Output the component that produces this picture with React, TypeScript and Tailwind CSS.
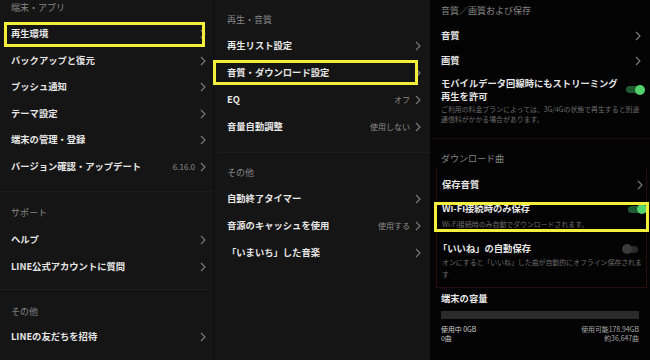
import React from "react";

const JP = "font-['Noto_Sans_CJK_JP','Noto_Sans',sans-serif]";

function Chevron() {
  return (
    <svg width="6" height="10" viewBox="0 0 6 10" className="shrink-0">
      <path d="M1 1l4 4-4 4" fill="none" stroke="#7c7c7c" strokeWidth="1.1" />
    </svg>
  );
}

function Toggle({ on }: { on: boolean }) {
  return (
    <div className={`relative w-[15px] h-[7px] rounded-full ${on ? "bg-[#1e5a31]" : "bg-[#2a2a2a]"}`}>
      <div
        className={`absolute top-1/2 -translate-y-1/2 w-[10px] h-[10px] rounded-full ${
          on ? "right-[-4px] bg-[#52d36d]" : "left-[-1px] bg-[#3a3a3a]"
        }`}
      />
    </div>
  );
}

function Header({ children, className = "" }: { children: React.ReactNode; className?: string }) {
  return (
    <div className={`h-[16px] flex items-center text-[9px] text-[#858585] ${className}`}>{children}</div>
  );
}

function Row({
  label,
  value,
  className = "",
  box,
}: {
  label: string;
  value?: string;
  className?: string;
  box?: string;
}) {
  return (
    <div className={`relative flex items-center ${className}`}>
      <span className="text-[9.3px] font-bold text-[#e6e6e6] whitespace-nowrap">{label}</span>
      <div className="ml-auto flex items-center gap-[5px]">
        {value && <span className="text-[8px] text-[#8c8c8c]">{value}</span>}
        <Chevron />
      </div>
      {box && <div className={`absolute border-[3px] border-[#f3ef3b] ${box}`} />}
    </div>
  );
}

function LeftPanel() {
  return (
    <div className="w-[213px] shrink-0 bg-[#151515] flex flex-col">
      <Header className="pl-[11px]">端末・アプリ</Header>
      <div className="mt-[5px] flex flex-col pl-[11px] pr-[7px]">
        <Row label="再生環境" className="h-[26.5px]" box="left-[-7px] right-[1px] top-[1px] bottom-[1px]" />
        <Row label="バックアップと復元" className="h-[26.5px]" />
        <Row label="プッシュ通知" className="h-[26.5px]" />
        <Row label="テーマ設定" className="h-[26.5px]" />
        <Row label="端末の管理・登録" className="h-[26.5px]" />
        <Row label="バージョン確認・アップデート" value="6.16.0" className="h-[26.5px]" />
      </div>
      <div className="mt-[11px] h-px bg-[#1d1d1d]" />
      <Header className="pl-[11px] mt-[13px]">サポート</Header>
      <div className="mt-[6px] flex flex-col pl-[11px] pr-[7px]">
        <Row label="ヘルプ" className="h-[26.5px]" />
        <Row label="LINE公式アカウントに質問" className="h-[26.5px]" />
      </div>
      <div className="mt-[9px] h-px bg-[#1d1d1d]" />
      <Header className="pl-[11px] mt-[14px]">その他</Header>
      <div className="mt-[4px] flex flex-col pl-[11px] pr-[7px]">
        <Row label="LINEの友だちを招待" className="h-[26.5px]" />
      </div>
    </div>
  );
}

function MiddlePanel() {
  return (
    <div className="w-[217px] shrink-0 bg-[#151515] border-l border-[#0d0d0d] flex flex-col">
      <Header className="pl-[13px] mt-[12px]">再生・音質</Header>
      <div className="mt-[4.5px] flex flex-col pl-[13px] pr-[9px]">
        <Row label="再生リスト設定" className="h-[27px]" />
        <Row label="音質・ダウンロード設定" className="h-[27px]" box="left-[-14px] right-[3px] top-[0.5px] bottom-[2px]" />
        <Row label="EQ" value="オフ" className="h-[27px]" />
        <Row label="音量自動調整" value="使用しない" className="h-[27px]" />
      </div>
      <div className="mt-[11px] ml-[4px] h-px bg-[#1d1d1d]" />
      <Header className="pl-[13px] mt-[12px]">その他</Header>
      <div className="mt-[4.5px] flex flex-col pl-[13px] pr-[9px]">
        <Row label="自動終了タイマー" className="h-[27px]" />
        <Row label="音源のキャッシュを使用" value="使用する" className="h-[27px]" />
        <Row label="「いまいち」した音楽" className="h-[27px]" />
      </div>
    </div>
  );
}

function RightPanel() {
  return (
    <div className="flex-1 bg-[#030303] flex flex-col pl-[11px]">
      <Header className="mt-[3px]">音質／画質および保存</Header>
      <div className="mt-[4.5px] flex flex-col pr-[9px]">
        <Row label="音質" className="h-[25px]" />
        <Row label="画質" className="h-[25px]" />
      </div>
      <div className="mt-[3px] flex items-center pr-[9px]">
        <div className="text-[9.3px] font-bold text-[#e6e6e6] leading-[13px]">
          モバイルデータ回線時にもストリーミング
          <br />
          再生を許可
        </div>
        <div className="ml-auto">
          <Toggle on />
        </div>
      </div>
      <div className="mt-[1.5px] pr-[9px] text-[6.9px] leading-[10px] text-[#6c6c6c] whitespace-nowrap">
        ご利用の料金プランによっては、3G/4Gの状態で再生すると別途
        <br />
        通信料がかかる場合があります。
      </div>
      <div className="mt-[14px] -ml-[11px] h-px bg-[#161010]" />
      <Header className="mt-[12px]">ダウンロード曲</Header>
      <div className="relative -ml-[5px] pl-[5px] mr-[3px] border-l border-b border-r border-[#2a0e0e] pb-[7px]">
        <div className="mt-[5.5px] flex flex-col pr-[3px]">
          <Row label="保存音質" className="h-[25px]" />
        </div>
        <div className="relative mt-[4.5px] pr-[3px] pb-[3px]">
          <div className="flex items-center h-[14px]">
            <span className="text-[9.3px] font-bold text-[#e6e6e6]">Wi-Fi接続時のみ保存</span>
            <div className="ml-auto">
              <Toggle on />
            </div>
          </div>
          <div className="mt-[3px] text-[6.9px] leading-[10px] text-[#6c6c6c]">
            Wi-Fi接続時のみ自動でダウンロードされます。
          </div>
          <div className="absolute left-[-8px] right-[-3px] top-0 bottom-0 border-[3px] border-[#f3ef3b]" />
        </div>
        <div className="mt-[10px] flex items-center h-[14px] pr-[8px]">
          <span className="text-[9.3px] font-bold text-[#e6e6e6] -ml-[4px]">「いいね」の自動保存</span>
          <div className="ml-auto">
            <Toggle on={false} />
          </div>
        </div>
        <div className="mt-[1px] pr-[3px] text-[6.9px] leading-[11.5px] text-[#6c6c6c]">
          オンにすると「いいね」した曲が自動的にオフライン保存されま
          <br />す
        </div>
      </div>
      <div className="mt-[4px] h-[14px] flex items-center text-[9.3px] font-bold text-[#e6e6e6]">端末の容量</div>
      <div className="mt-[5px] mr-[11px] h-[8px] bg-[#2b2b2b]" />
      <div className="mt-[5.5px] mr-[11px] flex justify-between text-[6.9px] leading-[9px] text-[#cfcfcf]">
        <div>
          使用中 0GB
          <br />
          0曲
        </div>
        <div className="text-right text-[#a8a8a8]">
          使用可能178.94GB
          <br />
          約36,647曲
        </div>
      </div>
    </div>
  );
}

export default function App() {
  return (
    <div className={`w-[650px] h-[360px] overflow-hidden flex ${JP}`}>
      <LeftPanel />
      <MiddlePanel />
      <RightPanel />
    </div>
  );
}
